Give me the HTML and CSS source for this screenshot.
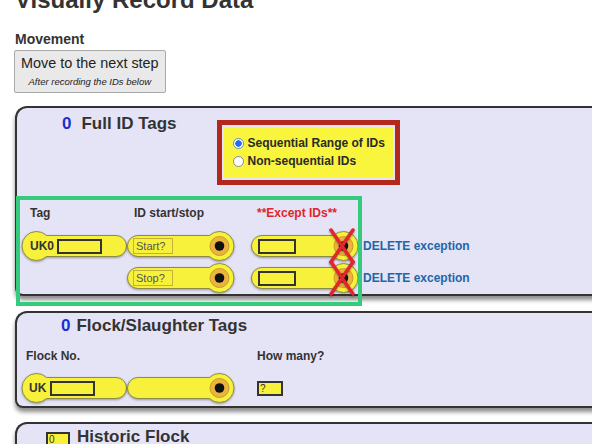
FILE: index.html
```html
<!DOCTYPE html>
<html lang="en">
<head>
<meta charset="utf-8">
<title>Visually Record Data</title>
<link rel="stylesheet" href="styles.css">
</head>
<body>
<h1 class="page-title">Visually Record Data</h1>
<h3 class="section-label">Movement</h3>
<button class="next-btn" type="button"><span class="btn-main">Move to the next step</span><span class="btn-sub">After recording the IDs below</span></button>

<section class="panel panel-full">
  <div class="panel-head">
    <h2 class="panel-title"><span class="count">0</span>Full ID Tags</h2>
    <div class="choice-frame">
      <div class="choice-box">
        <label class="choice"><span class="radio checked"></span>Sequential Range of IDs</label>
        <label class="choice"><span class="radio"></span>Non-sequential IDs</label>
      </div>
    </div>
  </div>

  <div class="tag-grid">
    <div class="col-label l1">Tag</div>
    <div class="col-label l2">ID start/stop</div>
    <div class="col-label l3">**Except IDs**</div>
    <div></div>

    <div class="pill socket">
      <svg viewBox="0 0 106 32" width="106" height="32"><path class="shape" d="M25.5 5.5H95A10.5 10.5 0 0 1 95 26.5H25.5A14.5 14.5 0 1 1 25.5 5.5Z"/></svg>
      <div class="pill-content tag-content"><span class="pill-text">UK0</span><span class="tag-box"></span></div>
    </div>
    <div class="pill plug">
      <svg viewBox="0 0 108 32" width="108" height="32"><path class="shape" d="M11 5.5H82.5A14.5 14.5 0 1 1 82.5 26.5H11A10.5 10.5 0 0 1 11 5.5Z"/><circle class="ring" cx="92.5" cy="16" r="9.5"/><circle class="dot" cx="92.5" cy="16" r="4.8"/></svg>
      <div class="pill-content plug-content"><span class="id-box">Start?</span></div>
    </div>
    <div class="pill plug">
      <svg viewBox="0 0 108 32" width="108" height="32"><path class="shape" d="M11 5.5H82.5A14.5 14.5 0 1 1 82.5 26.5H11A10.5 10.5 0 0 1 11 5.5Z"/><circle class="ring" cx="92.5" cy="16" r="9.5"/><circle class="dot" cx="92.5" cy="16" r="4.8"/></svg>
      <div class="pill-content except-content"><span class="except-box"></span></div>
      <svg class="xmark" viewBox="0 0 28 36" width="28" height="36"><path d="M3 2L25 34M25 2L3 34"/></svg>
    </div>
    <div class="delete">DELETE exception</div>

    <div></div>
    <div class="pill plug">
      <svg viewBox="0 0 108 32" width="108" height="32"><path class="shape" d="M11 5.5H82.5A14.5 14.5 0 1 1 82.5 26.5H11A10.5 10.5 0 0 1 11 5.5Z"/><circle class="ring" cx="92.5" cy="16" r="9.5"/><circle class="dot" cx="92.5" cy="16" r="4.8"/></svg>
      <div class="pill-content plug-content"><span class="id-box">Stop?</span></div>
    </div>
    <div class="pill plug">
      <svg viewBox="0 0 108 32" width="108" height="32"><path class="shape" d="M11 5.5H82.5A14.5 14.5 0 1 1 82.5 26.5H11A10.5 10.5 0 0 1 11 5.5Z"/><circle class="ring" cx="92.5" cy="16" r="9.5"/><circle class="dot" cx="92.5" cy="16" r="4.8"/></svg>
      <div class="pill-content except-content"><span class="except-box"></span></div>
      <svg class="xmark" viewBox="0 0 28 36" width="28" height="36"><path d="M3 2L25 34M25 2L3 34"/></svg>
    </div>
    <div class="delete">DELETE exception</div>
  </div>

  <div class="annot-green"></div>
</section>

<section class="panel panel-flock">
  <h2 class="panel-title"><span class="count">0</span>Flock/Slaughter Tags</h2>
  <div class="flock-grid">
    <div class="col-label f1">Flock No.</div>
    <div></div>
    <div class="col-label f3">How many?</div>

    <div class="pill socket">
      <svg viewBox="0 0 106 32" width="106" height="32"><path class="shape" d="M25.5 5.5H95A10.5 10.5 0 0 1 95 26.5H25.5A14.5 14.5 0 1 1 25.5 5.5Z"/></svg>
      <div class="pill-content flock-content"><span class="pill-text">UK</span><span class="tag-box"></span></div>
    </div>
    <div class="pill plug">
      <svg viewBox="0 0 108 32" width="108" height="32"><path class="shape" d="M11 5.5H82.5A14.5 14.5 0 1 1 82.5 26.5H11A10.5 10.5 0 0 1 11 5.5Z"/><circle class="ring" cx="92.5" cy="16" r="9.5"/><circle class="dot" cx="92.5" cy="16" r="4.8"/></svg>
    </div>
    <div class="qty-box">?</div>
  </div>
</section>

<section class="panel panel-historic">
  <div class="hist-head">
    <span class="hist-box">0</span>
    <h2 class="panel-title hist-title">Historic Flock</h2>
  </div>
</section>
</body>
</html>
```

FILE: styles.css
```css
html {
  overflow: hidden;
  background: #fff;
}

body {
  margin: 0;
  padding: 0 0 0 15px;
  font-family: "Liberation Sans", Arial, sans-serif;
  color: #333;
}

.page-title {
  margin: -14px 0 0;
  font-size: 24px;
  line-height: 28px;
  font-weight: bold;
  color: #333;
  white-space: nowrap;
}

.section-label {
  margin: 17px 0 0;
  font-size: 14px;
  line-height: 17px;
  font-weight: bold;
  color: #333;
}

.next-btn {
  display: flex;
  flex-direction: column;
  align-items: center;
  margin: 2px 0 0 -1px;
  padding: 3px 6px;
  background: #e9e9e9;
  border: 1px solid #a9a9a9;
  border-radius: 2px;
  font-family: "Liberation Sans", Arial, sans-serif;
  color: #222;
}

.btn-main {
  font-size: 14.4px;
  line-height: 18px;
  white-space: nowrap;
}

.btn-sub {
  margin-top: 3px;
  font-size: 9.5px;
  line-height: 14px;
  font-style: italic;
  white-space: nowrap;
}

/* panels */
.panel {
  position: relative;
  width: 640px;
  box-sizing: border-box;
  background: #e4e4f6;
  border: 2px solid #333;
  border-right: none;
  border-radius: 12px 0 0 8px;
  box-shadow: 0 4px 4px rgba(0, 0, 0, 0.45);
}

.panel-full {
  margin-top: 13px;
  padding-top: 6px;
}

.panel-flock {
  margin-top: 15px;
  padding: 3px 0 2px;
}

.panel-historic {
  margin-top: 14px;
  padding-top: 3px;
  height: 60px;
}

.panel-title {
  margin: 0;
  font-size: 17px;
  line-height: 20px;
  font-weight: bold;
  color: #333;
  white-space: nowrap;
}

.count {
  color: #1c30cf;
}

.panel-head {
  display: flex;
  align-items: flex-start;
}

.panel-full .panel-title {
  flex: 0 0 200px;
  box-sizing: border-box;
  padding-left: 45px;
}

.panel-full .count {
  margin-right: 10px;
}

.panel-flock .panel-title {
  padding-left: 44px;
}

.panel-flock .count {
  margin-right: 6px;
}

/* radio choice */
.choice-frame {
  margin-top: 6px;
  border: 5px solid #b3271d;
  padding: 2px;
}

.choice-box {
  width: 169px;
  box-sizing: border-box;
  background: #f8f53c;
  padding: 7px 0 8px 9px;
}

.choice {
  display: flex;
  align-items: center;
  height: 18px;
  font-size: 12px;
  font-weight: bold;
  color: #2a2a2a;
  white-space: nowrap;
}

.radio {
  flex: none;
  width: 11px;
  height: 11px;
  box-sizing: border-box;
  margin-right: 3.5px;
  border-radius: 50%;
  border: 1px solid #8a8a8a;
  background: #fff;
}

.radio.checked {
  border-color: #6d86bd;
  background: radial-gradient(circle, #1f6fe8 0 3px, #fff 3.4px);
}

/* tag grid */
.tag-grid {
  display: grid;
  grid-template-columns: 106px 124px 112px auto;
  grid-template-rows: auto 32px 32px;
  margin: 21px 0 0 4px;
}

.col-label {
  font-size: 12px;
  line-height: 14px;
  font-weight: bold;
  color: #333;
  padding-bottom: 10px;
  white-space: nowrap;
}

.l1 { padding-left: 9px; }
.l2 { padding-left: 7px; }
.l3 { padding-left: 6px; color: #e0242a; }

.pill {
  position: relative;
  display: grid;
  height: 32px;
}

.pill > svg,
.pill > .pill-content {
  grid-area: 1 / 1;
}

.socket { width: 106px; }
.plug { width: 108px; }

.pill > svg {
  display: block;
  filter: drop-shadow(0.5px 1.5px 1px rgba(0, 0, 0, 0.35));
}

.shape {
  fill: #f8f13b;
  stroke: #8d8b45;
  stroke-width: 1;
}

.ring {
  fill: #eab53c;
  stroke: #c99a2b;
  stroke-width: 1;
}

.dot {
  fill: #111;
}

.pill-content {
  position: relative;
  display: flex;
  align-items: center;
}

.pill-text {
  font-size: 12px;
  font-weight: bold;
  color: #333;
}

.tag-content { padding-left: 9px; }
.tag-content .tag-box { margin-left: 3px; }
.flock-content { padding-left: 8px; }
.flock-content .tag-box { margin-left: 4px; }

.tag-box {
  width: 45px;
  height: 15px;
  box-sizing: border-box;
  border: 2px solid #333;
  background: #f8f13b;
}

.plug-content { padding-left: 6px; }

.id-box {
  width: 40px;
  height: 16px;
  box-sizing: border-box;
  border: 1px solid #c4b236;
  background: #f8f13b;
  padding-left: 2px;
  font-size: 11px;
  line-height: 14px;
  color: #555;
}

.except-content { padding-left: 7px; }

.except-box {
  width: 38px;
  height: 15px;
  box-sizing: border-box;
  border: 2px solid #333;
  background: #f8f13b;
}

.xmark {
  position: absolute;
  left: 77px;
  top: -2px;
  width: 28px;
  height: 36px;
}

.xmark path {
  fill: none;
  stroke: #e3262b;
  stroke-width: 3.5;
  stroke-linecap: round;
}

.delete {
  align-self: center;
  font-size: 12px;
  font-weight: bold;
  color: #2166a8;
  white-space: nowrap;
}

.annot-green {
  position: absolute;
  left: -1px;
  top: 88px;
  width: 346px;
  height: 110px;
  box-sizing: border-box;
  border: 4px solid #34cc7c;
}

/* flock */
.flock-grid {
  display: grid;
  grid-template-columns: 106px 130px auto;
  grid-template-rows: auto 32px;
  margin: 13px 0 0 4px;
}

.flock-grid .col-label { padding-bottom: 9px; }
.f1 { padding-left: 5px; }

.qty-box {
  align-self: center;
  justify-self: start;
  width: 26px;
  height: 15px;
  box-sizing: border-box;
  border: 2px solid #333;
  background: #f8f13b;
  padding-left: 1px;
  font-size: 10px;
  line-height: 11px;
  color: #333;
}

/* historic */
.hist-head {
  display: flex;
  align-items: flex-start;
  padding-left: 29px;
}

.hist-box {
  width: 24px;
  height: 16px;
  margin-top: 5px;
  box-sizing: border-box;
  border: 2px solid #333;
  background: #f8f13b;
  padding-left: 1px;
  font-size: 10px;
  line-height: 12px;
  color: #333;
}

.hist-title {
  margin-left: 7px;
}
```
